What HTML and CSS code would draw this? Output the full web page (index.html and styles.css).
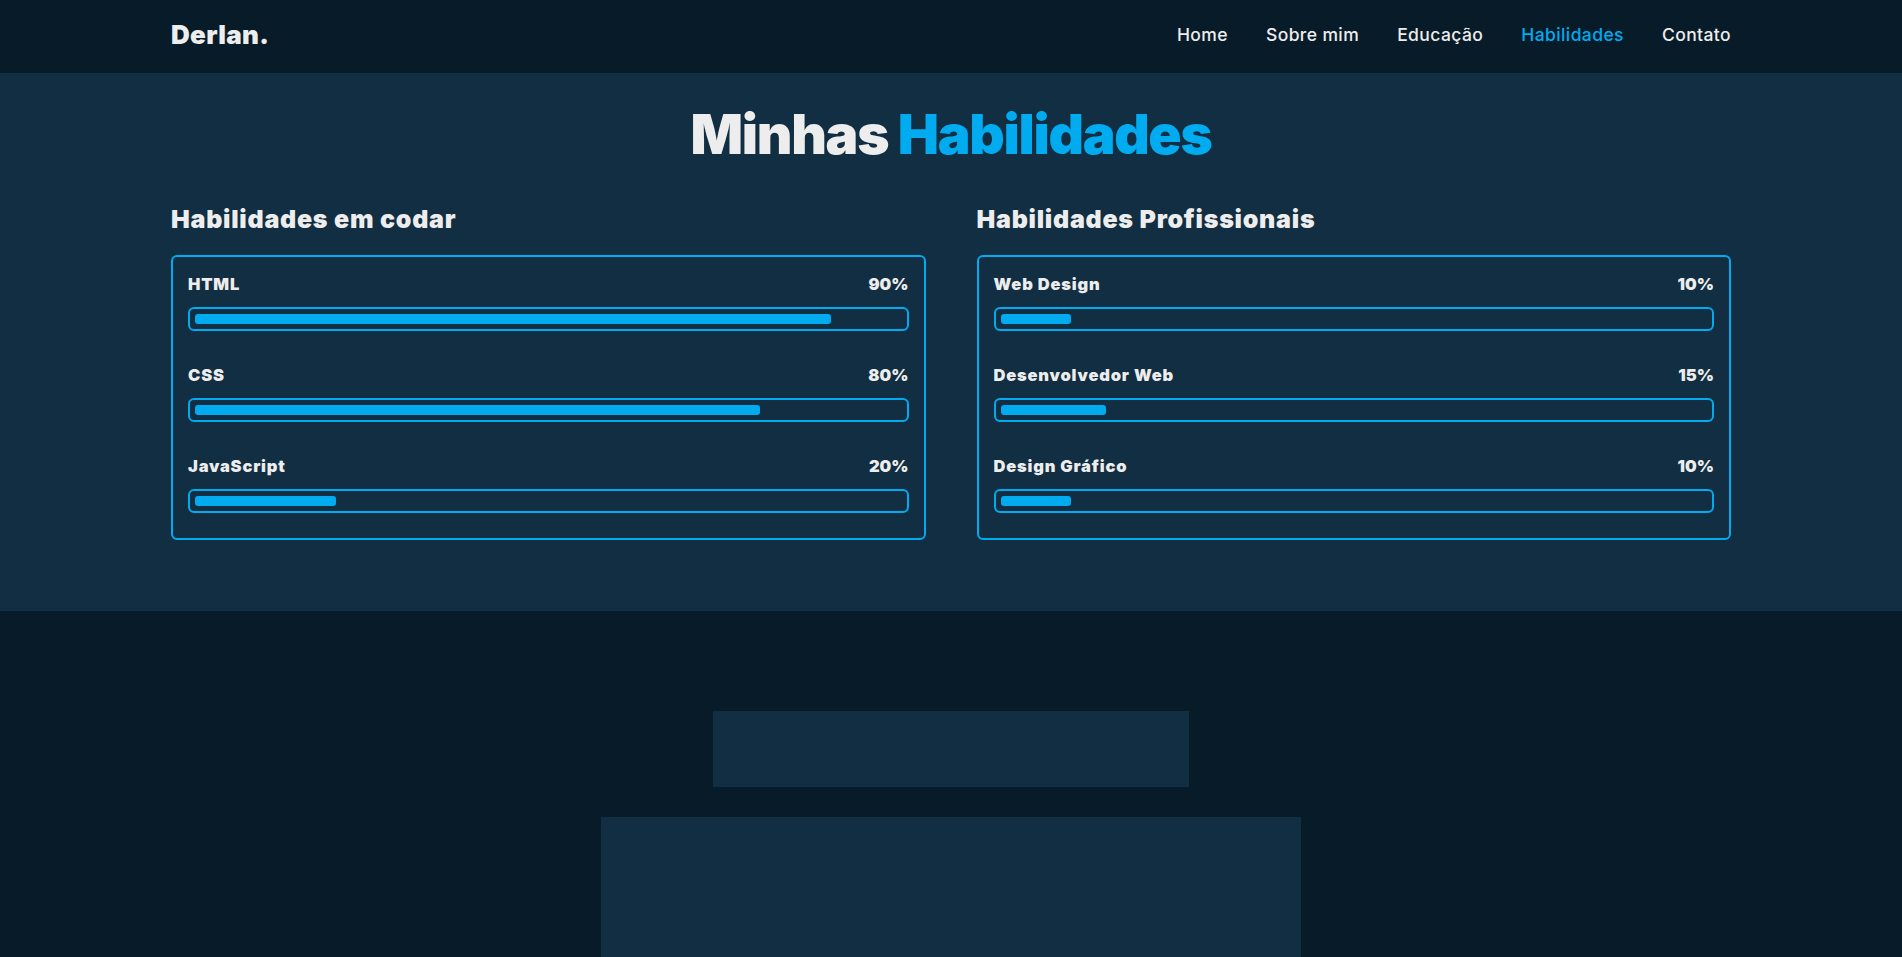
FILE: index.html
```html
<!DOCTYPE html>
<html lang="pt-BR">
<head>
<meta charset="utf-8">
<title>Derlan - Habilidades</title>
<link rel="stylesheet" href="styles.css">
</head>
<body>
<header class="header">
  <a class="logo" href="#">Derlan.</a>
  <nav class="navbar">
    <a href="#">Home</a>
    <a href="#">Sobre mim</a>
    <a href="#">Educação</a>
    <a href="#" class="active">Habilidades</a>
    <a href="#">Contato</a>
  </nav>
</header>

<section class="skills">
  <h2 class="heading">Minhas <span>Habilidades</span></h2>
  <div class="skills-row">
    <div class="skills-column">
      <h3 class="title">Habilidades em codar</h3>
      <div class="skills-box">
        <div class="skill">
          <div class="skill-head"><span>HTML</span><span class="pct">90%</span></div>
          <div class="bar"><span class="fill" style="width:90%"></span></div>
        </div>
        <div class="skill">
          <div class="skill-head"><span>CSS</span><span class="pct">80%</span></div>
          <div class="bar"><span class="fill" style="width:80%"></span></div>
        </div>
        <div class="skill">
          <div class="skill-head"><span>JavaScript</span><span class="pct">20%</span></div>
          <div class="bar"><span class="fill" style="width:20%"></span></div>
        </div>
      </div>
    </div>
    <div class="skills-column">
      <h3 class="title">Habilidades Profissionais</h3>
      <div class="skills-box">
        <div class="skill">
          <div class="skill-head"><span>Web Design</span><span class="pct">10%</span></div>
          <div class="bar"><span class="fill" style="width:10%"></span></div>
        </div>
        <div class="skill">
          <div class="skill-head"><span>Desenvolvedor Web</span><span class="pct">15%</span></div>
          <div class="bar"><span class="fill" style="width:15%"></span></div>
        </div>
        <div class="skill">
          <div class="skill-head"><span>Design Gráfico</span><span class="pct">10%</span></div>
          <div class="bar"><span class="fill" style="width:10%"></span></div>
        </div>
      </div>
    </div>
  </div>
</section>

<section class="contact">
  <div class="block block-small"></div>
  <div class="block block-large"></div>
</section>
</body>
</html>
```

FILE: styles.css
```css
* {
  box-sizing: border-box;
  margin: 0;
  padding: 0;
}

body {
  background: #081b29;
  color: #ededed;
  font-family: Inter, "Liberation Sans", sans-serif;
}

a {
  text-decoration: none;
  color: inherit;
}

.header {
  height: 73px;
  padding: 0 171px 4px;
  display: flex;
  align-items: center;
  justify-content: space-between;
  background: #081b29;
}

.logo {
  font-size: 26px;
  font-weight: 900;
  color: #ededed;
  letter-spacing: 0.3px;
}

.navbar {
  display: flex;
  gap: 38px;
}

.navbar a {
  font-size: 17.5px;
  font-weight: 500;
  color: #ededed;
  letter-spacing: 0.4px;
}

.navbar a.active {
  color: #00abf0;
}

.skills {
  background: #112e42;
  padding: 28px 171px 71px;
}

.heading {
  text-align: center;
  font-size: 55px;
  line-height: 66px;
  font-weight: 900;
  letter-spacing: -1.3px;
}

.heading span {
  color: #00abf0;
}

.skills-row {
  display: grid;
  grid-template-columns: 1fr 1fr;
  column-gap: 51px;
  margin-top: 37px;
}

.title {
  font-size: 25px;
  line-height: 30px;
  font-weight: 900;
  letter-spacing: 0.75px;
  margin-bottom: 21px;
}

.skills-box {
  border: 2px solid #00abf0;
  border-radius: 6px;
  padding: 15px 15px 25px;
  display: flex;
  flex-direction: column;
  gap: 32px;
}

.skill-head {
  display: flex;
  justify-content: space-between;
  font-size: 16.5px;
  line-height: 24px;
  font-weight: 900;
  letter-spacing: 0.8px;
}

.skill-head .pct {
  letter-spacing: 0;
}

.bar {
  margin-top: 11px;
  height: 24px;
  border: 2px solid #00abf0;
  border-radius: 6px;
  padding: 5px;
}

.fill {
  display: block;
  height: 10px;
  background: #00abf0;
  border-radius: 3px;
}

.contact {
  padding-top: 100px;
  display: flex;
  flex-direction: column;
  align-items: center;
  gap: 30px;
}

.block {
  background: #112e42;
}

.block-small {
  width: 476px;
  height: 76px;
}

.block-large {
  width: 700px;
  height: 300px;
}
```
